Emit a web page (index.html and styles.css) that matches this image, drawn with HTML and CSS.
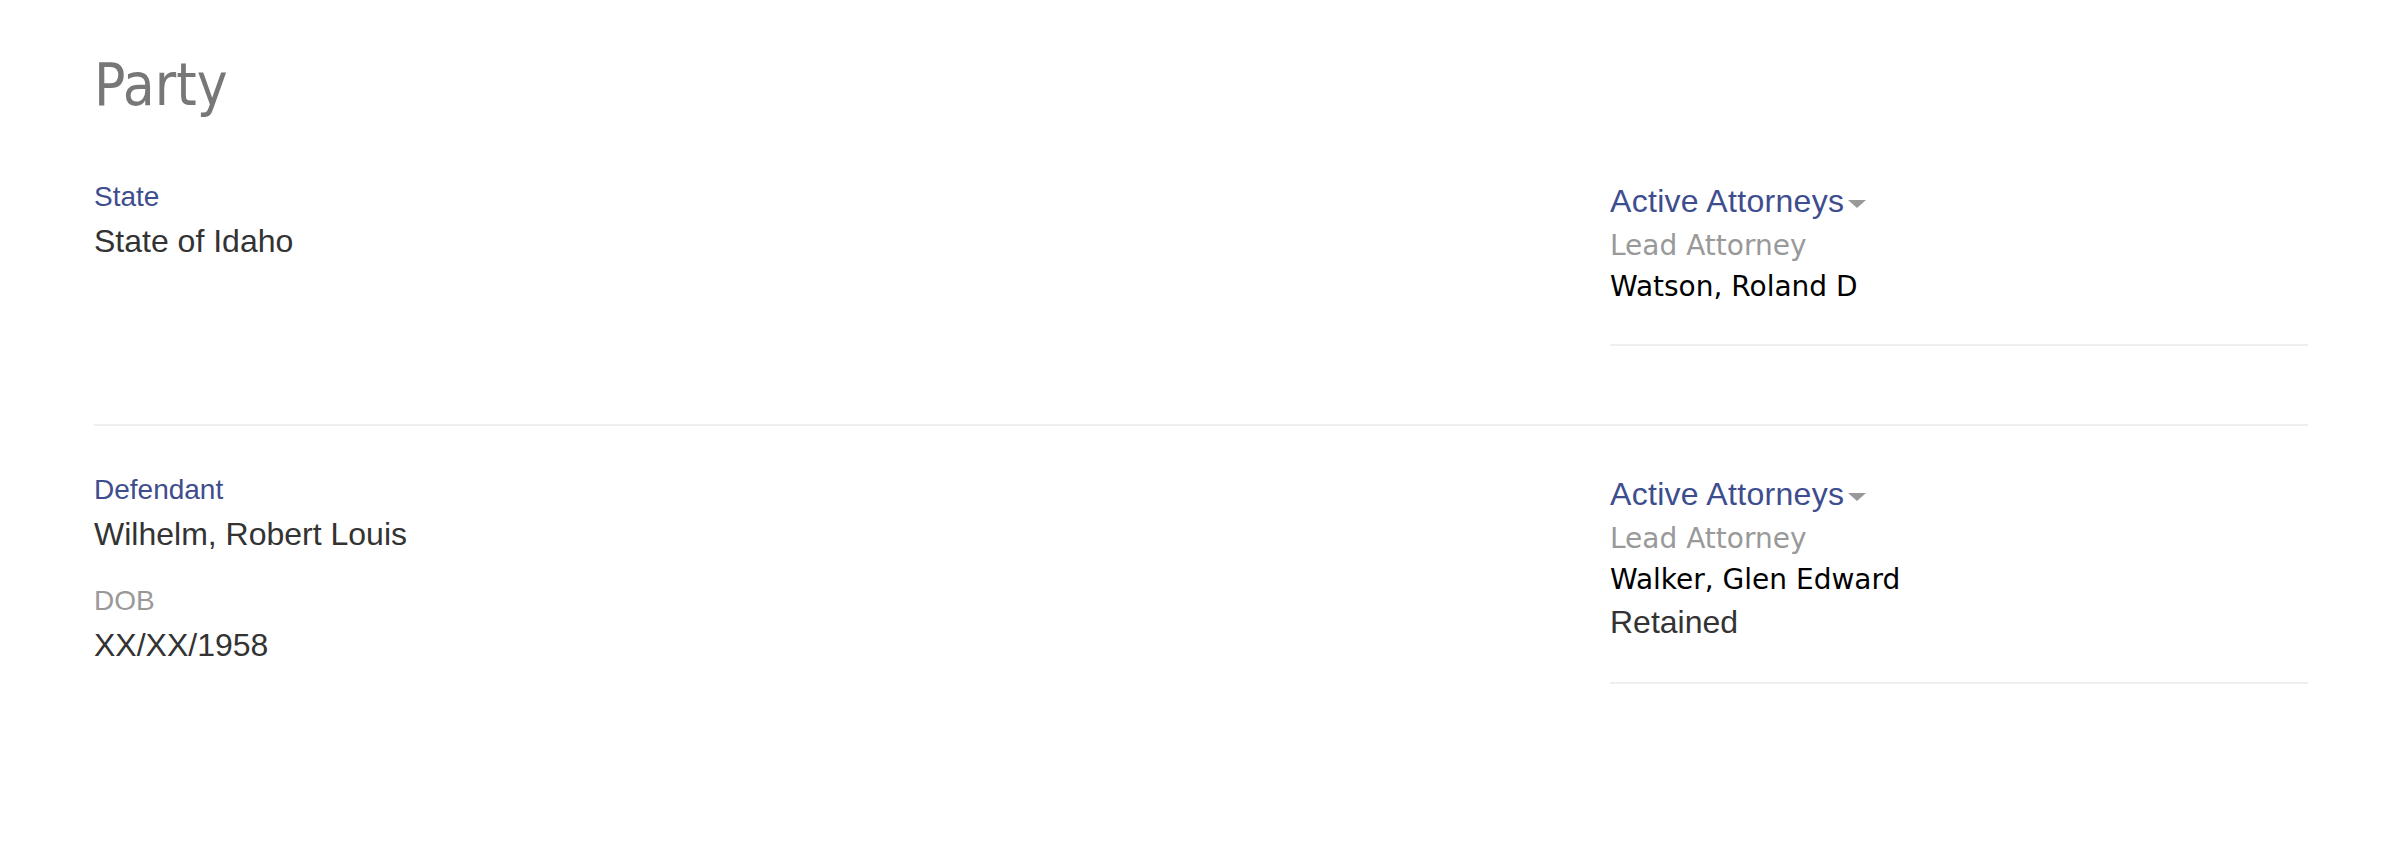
FILE: index.html
```html
<!DOCTYPE html>
<html lang="en">
<head>
<meta charset="utf-8">
<title>Party</title>
<link rel="stylesheet" href="styles.css">
</head>
<body>
<div class="page">
  <h1 class="title">Party</h1>
  <div class="party-row">
    <div class="party-info">
      <div class="label">State</div>
      <div class="value">State of Idaho</div>
    </div>
    <div class="attorneys">
      <div class="att-head">Active Attorneys<span class="caret"></span></div>
      <div class="att-role">Lead Attorney</div>
      <div class="att-name">Watson, Roland D</div>
    </div>
  </div>
  <div class="party-row">
    <div class="party-info">
      <div class="label">Defendant</div>
      <div class="value">Wilhelm, Robert Louis</div>
      <div class="sub-label">DOB</div>
      <div class="value">XX/XX/1958</div>
    </div>
    <div class="attorneys">
      <div class="att-head">Active Attorneys<span class="caret"></span></div>
      <div class="att-role">Lead Attorney</div>
      <div class="att-name">Walker, Glen Edward</div>
      <div class="att-type">Retained</div>
    </div>
  </div>
</div>
</body>
</html>
```

FILE: styles.css
```css
html, body {
  margin: 0;
  padding: 0;
  background: #ffffff;
}

.page {
  padding: 52px 90px 0 94px;
  font-family: "Liberation Sans", Arial, sans-serif;
}

.title {
  margin: 0 0 14px;
  font-family: "DejaVu Sans Condensed", "DejaVu Sans", sans-serif;
  font-weight: normal;
  font-size: 58px;
  line-height: 66px;
  color: #777777;
}

.party-row {
  display: grid;
  grid-template-columns: 1516px 698px;
  padding: 43px 0 78px;
}

.party-row + .party-row {
  border-top: 2px solid #eeeeee;
  padding-top: 42px;
}

.label {
  font-size: 28px;
  line-height: 44px;
  color: #3e4d8e;
}

.value {
  font-size: 32px;
  line-height: 44px;
  color: #333333;
}

.sub-label {
  margin-top: 23px;
  font-size: 28px;
  line-height: 44px;
  color: #999999;
}

.attorneys {
  margin-top: 4px;
  padding-bottom: 37px;
  border-bottom: 2px solid #eeeeee;
  align-self: start;
}

.att-head {
  font-size: 32px;
  line-height: 44px;
  letter-spacing: 0.3px;
  color: #3e4d8e;
}

.caret {
  display: inline-block;
  width: 0;
  height: 0;
  margin-left: 4px;
  vertical-align: middle;
  border-top: 8px solid #999999;
  border-left: 9px solid transparent;
  border-right: 9px solid transparent;
}

.att-role {
  margin-top: 2px;
  font-family: "DejaVu Sans", Verdana, sans-serif;
  font-size: 28px;
  line-height: 42px;
  color: #999999;
}

.att-name {
  font-family: "DejaVu Sans", Verdana, sans-serif;
  font-size: 28px;
  line-height: 40px;
  color: #000000;
}

.att-type {
  font-size: 32px;
  line-height: 45px;
  color: #333333;
}
```
